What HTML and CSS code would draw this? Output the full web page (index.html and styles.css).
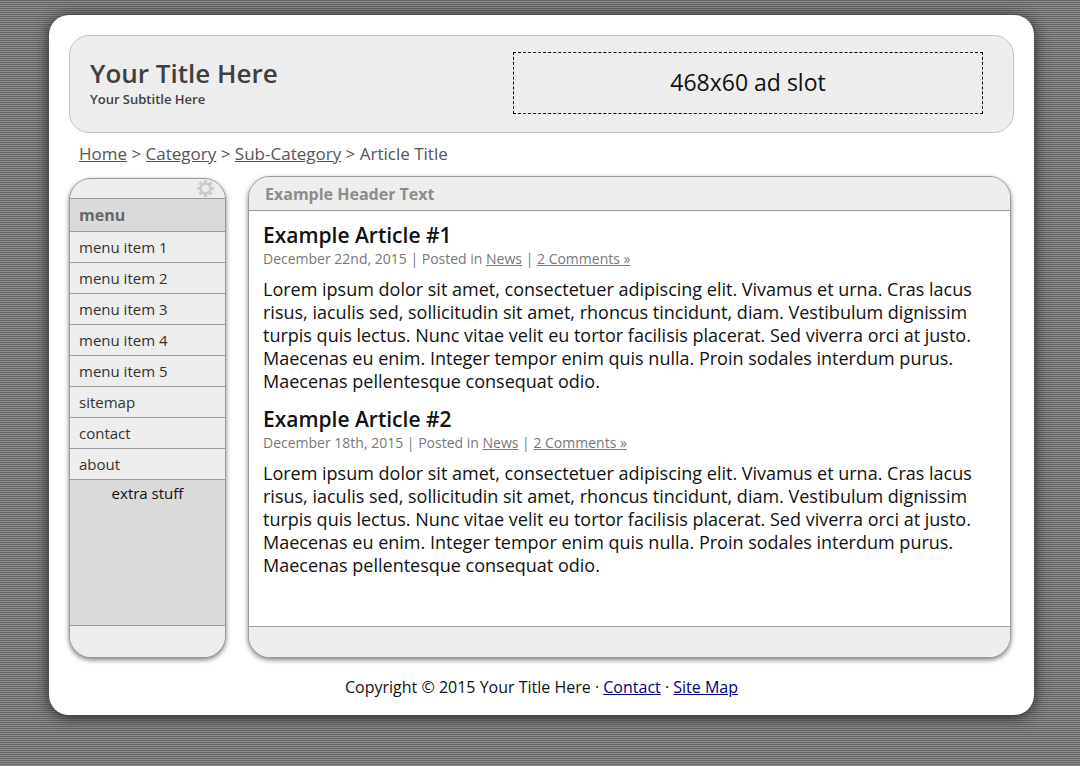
FILE: index.html
```html
<!DOCTYPE html>
<html lang="en">
<head>
<meta charset="utf-8">
<meta name="viewport" content="width=device-width, initial-scale=1">
<title>Your Title Here</title>
<link rel="stylesheet" href="styles.css">
</head>
<body>
<div class="page">
  <header class="banner">
    <div class="brand">
      <h1 class="brand-title">Your Title Here</h1>
      <p class="brand-subtitle">Your Subtitle Here</p>
    </div>
    <div class="ad">468x60 ad slot</div>
  </header>
  <nav class="crumbs" aria-label="Breadcrumb"><a href="#">Home</a> &gt; <a href="#">Category</a> &gt; <a href="#">Sub-Category</a> &gt; Article Title</nav>
  <div class="columns">
    <aside class="panel sidebar">
      <div class="sidebar-top">
        <svg class="gear" viewBox="0 0 18 18" aria-hidden="true">
          <g fill="#cbcbcb">
            <rect x="7.3" y="0" width="3.4" height="18" rx="0.6"/>
            <rect x="7.3" y="0" width="3.4" height="18" rx="0.6" transform="rotate(45 9 9)"/>
            <rect x="7.3" y="0" width="3.4" height="18" rx="0.6" transform="rotate(90 9 9)"/>
            <rect x="7.3" y="0" width="3.4" height="18" rx="0.6" transform="rotate(135 9 9)"/>
            <circle cx="9" cy="9" r="6.6"/>
          </g>
          <circle cx="9" cy="9" r="3.7" fill="#ededed"/>
        </svg>
      </div>
      <h2 class="menu-title">menu</h2>
      <ul class="menu">
        <li><a href="#">menu item 1</a></li>
        <li><a href="#">menu item 2</a></li>
        <li><a href="#">menu item 3</a></li>
        <li><a href="#">menu item 4</a></li>
        <li><a href="#">menu item 5</a></li>
        <li><a href="#">sitemap</a></li>
        <li><a href="#">contact</a></li>
        <li><a href="#">about</a></li>
      </ul>
      <p class="extra">extra stuff</p>
      <div class="panel-foot"></div>
    </aside>
    <main class="panel content">
      <h2 class="content-head">Example Header Text</h2>
      <div class="articles">
        <article class="article">
          <h3 class="article-title">Example Article #1</h3>
          <p class="meta">December 22nd, 2015 | Posted in <a href="#">News</a> | <a href="#">2 Comments »</a></p>
          <p class="text">Lorem ipsum dolor sit amet, consectetuer adipiscing elit. Vivamus et urna. Cras lacus risus, iaculis sed, sollicitudin sit amet, rhoncus tincidunt, diam. Vestibulum dignissim turpis quis lectus. Nunc vitae velit eu tortor facilisis placerat. Sed viverra orci at justo. Maecenas eu enim. Integer tempor enim quis nulla. Proin sodales interdum purus. Maecenas pellentesque consequat odio.</p>
        </article>
        <article class="article">
          <h3 class="article-title">Example Article #2</h3>
          <p class="meta">December 18th, 2015 | Posted in <a href="#">News</a> | <a href="#">2 Comments »</a></p>
          <p class="text">Lorem ipsum dolor sit amet, consectetuer adipiscing elit. Vivamus et urna. Cras lacus risus, iaculis sed, sollicitudin sit amet, rhoncus tincidunt, diam. Vestibulum dignissim turpis quis lectus. Nunc vitae velit eu tortor facilisis placerat. Sed viverra orci at justo. Maecenas eu enim. Integer tempor enim quis nulla. Proin sodales interdum purus. Maecenas pellentesque consequat odio.</p>
        </article>
      </div>
      <div class="panel-foot content-foot"></div>
    </main>
  </div>
  <footer class="copyright">Copyright © 2015 Your Title Here · <a href="#">Contact</a> · <a href="#">Site Map</a></footer>
</div>
</body>
</html>
```
FILE: styles.css
```css
* { box-sizing: border-box; margin: 0; padding: 0; }

body {
  background: repeating-linear-gradient(to bottom, #666666 0, #666666 1px, #8c8c8c 1px, #8c8c8c 2px);
  color: #111111;
  font: 400 16px/23px "Open Sans", sans-serif;
}

.page {
  margin: 15px 46px 51px 49px;
  padding: 20px 20px 0;
  background: #ffffff;
  border-radius: 20px;
  box-shadow: 0 2px 15px #222222;
}

.banner {
  display: flex;
  justify-content: space-between;
  align-items: flex-start;
  padding: 16px 30px 18px 20px;
  background: #ededed;
  border: 1px solid #c4c4c4;
  border-radius: 20px;
}

.brand { color: #404040; padding-top: 3px; }
.brand-title { font-size: 26px; font-weight: 600; line-height: 36px; }
.brand-subtitle { font-size: 13px; font-weight: 600; line-height: 16px; }

.ad {
  width: 470px;
  height: 62px;
  border: 1px dashed #000000;
  font-size: 23px;
  line-height: 58px;
  text-align: center;
}

.crumbs { padding: 9px 10px 11px; font-size: 17px; color: #555555; }
.crumbs a { color: inherit; }

.columns { display: flex; gap: 22px; padding-right: 3px; }

.panel {
  display: flex;
  flex-direction: column;
  border: 1px solid #999999;
  border-radius: 22px;
  box-shadow: 0 2px 5px rgba(0, 0, 0, 0.5);
  overflow: hidden;
}

.panel-foot { height: 32px; background: #ededed; border-top: 1px solid #999999; }

.sidebar { flex: 0 0 157px; margin-top: 2px; background: #dadada; }
.sidebar-top { height: 19px; padding: 1px 11px 0 0; background: #ededed; }
.gear { display: block; width: 17px; height: 17px; margin-left: auto; }

.menu-title {
  padding: 0 9px;
  border-top: 1px solid #999999;
  border-bottom: 1px solid #999999;
  color: #666666;
  font-size: 16px;
  font-weight: 700;
  line-height: 32px;
}

.menu { list-style: none; }
.menu a {
  display: block;
  padding: 0 9px;
  background: #ededed;
  border-bottom: 1px solid #999999;
  color: #333333;
  font-size: 15px;
  line-height: 30px;
  text-decoration: none;
}

.extra { flex: 1; padding-top: 2px; font-size: 15px; text-align: center; }

.content { flex: 1; background: #ffffff; }
.content-foot { height: 31px; }
.content-head {
  padding: 1px 16px 0;
  background: #ededed;
  border-bottom: 1px solid #999999;
  color: #8c8c8c;
  font-size: 16px;
  font-weight: 700;
  line-height: 32px;
}

.articles { flex: 1; padding: 10px 14px 37px; }
.article { padding-bottom: 12px; }
.article-title { font-size: 21px; font-weight: 600; line-height: 28px; }
.meta { color: #777777; font-size: 14px; line-height: 19px; }
.meta a { color: inherit; }
.text { margin-top: 10px; font-size: 18px; line-height: 23px; }

.copyright { padding: 18px 0 16px; text-align: center; }
.copyright a { color: #000080; }
```
